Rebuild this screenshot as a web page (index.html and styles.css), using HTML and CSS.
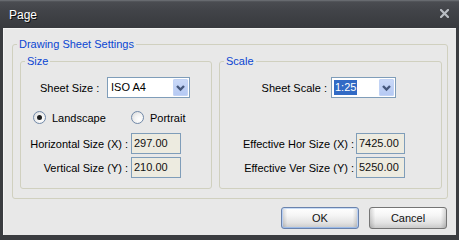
FILE: index.html
```html
<!DOCTYPE html>
<html>
<head>
<meta charset="utf-8">
<link rel="stylesheet" href="styles.css">
</head>
<body>
<div class="window">
  <div class="titlebar">
    <span class="title">Page</span>
    <svg class="close" width="9" height="9" viewBox="0 0 9 9"><path d="M1 1 L8 8 M8 1 L1 8" stroke="#b9bdc3" stroke-width="2.2" stroke-linecap="square"/></svg>
  </div>
  <div class="body">
    <fieldset class="group outer">
      <legend>Drawing Sheet Settings</legend>
      <div class="panels">
        <fieldset class="group size">
          <legend>Size</legend>
          <div class="sheet-row size-sheet">
            <span class="lbl">Sheet Size :</span>
            <div class="combo combo-size">
              <span class="combo-text">ISO A4</span>
              <span class="combo-btn"><svg width="15" height="17" viewBox="0 0 15 17"><path d="M4 7 L7.5 10.5 L11 7" fill="none" stroke="#45587c" stroke-width="2.4"/></svg></span>
            </div>
          </div>
          <div class="radios">
            <span class="radio"><span class="dot checked"></span>Landscape</span>
            <span class="radio"><span class="dot"></span>Portrait</span>
          </div>
          <div class="fields size-fields">
            <span class="flabel">Horizontal Size (X) :</span><span class="field">297.00</span>
            <span class="flabel">Vertical Size (Y) :</span><span class="field">210.00</span>
          </div>
        </fieldset>
        <fieldset class="group scale">
          <legend>Scale</legend>
          <div class="sheet-row scale-sheet">
            <span class="lbl">Sheet Scale :</span>
            <div class="combo combo-scale">
              <span class="combo-text"><span class="sel">1:25</span></span>
              <span class="combo-btn"><svg width="15" height="17" viewBox="0 0 15 17"><path d="M4 7 L7.5 10.5 L11 7" fill="none" stroke="#45587c" stroke-width="2.4"/></svg></span>
            </div>
          </div>
          <div class="fields scale-fields">
            <span class="flabel">Effective Hor Size (X) :</span><span class="field">7425.00</span>
            <span class="flabel">Effective Ver Size (Y) :</span><span class="field">5250.00</span>
          </div>
        </fieldset>
      </div>
    </fieldset>
    <div class="buttons">
      <button class="btn default">OK</button>
      <button class="btn">Cancel</button>
    </div>
  </div>
</div>
</body>
</html>
```
FILE: styles.css
```css
html, body {
  margin: 0;
  padding: 0;
}
body {
  font-family: "Liberation Sans", Arial, sans-serif;
  font-size: 11px;
  color: #000;
}
.window {
  width: 459px;
  height: 240px;
  background: #3a3c40;
  display: flex;
  flex-direction: column;
  box-sizing: border-box;
}
.titlebar {
  height: 28px;
  flex: none;
  display: flex;
  align-items: center;
  justify-content: space-between;
  padding: 0 10px 0 9px;
  background: linear-gradient(#74777c 0, #5a5d62 1px, #4a4c51 2px, #414348 40%, #383a3e 100%);
}
.title {
  color: #fff;
  font-size: 12px;
  text-shadow: 1px 1px 0 #0c0c0c;
  margin-top: 1px;
}
.close {
  display: block;
  margin-top: -1px;
}
.body {
  flex: 1;
  margin: 0 3px 5px 3px;
  background: #e8e8e8;
  border-top: 1px solid #f4f4f4;
  border-left: 1px solid #f4f4f4;
  display: flex;
  flex-direction: column;
}
.group {
  margin: 0;
  padding: 0;
  border: 1px solid #d0d0bf;
  border-radius: 3px;
  min-inline-size: 0;
}
.group > legend {
  padding: 0 2px;
  margin-left: 4px;
  line-height: 13px;
  color: #0a46d2;
}
.outer {
  margin: 9px 8px 0 8px;
}
.panels {
  display: flex;
  gap: 7px;
  padding: 4px 5px 9px 7px;
}
.size {
  width: 192px;
  box-sizing: border-box;
  padding-bottom: 10px;
}
.scale {
  flex: 1;
  padding-bottom: 10px;
}
.sheet-row {
  display: flex;
  align-items: center;
  margin-top: 9px;
  height: 21px;
}
.size-sheet {
  padding-left: 19px;
}
.size-sheet .lbl {
  width: 67px;
}
.scale-sheet .lbl {
  width: 107px;
  text-align: right;
  margin-right: 4px;
}
.combo {
  box-sizing: border-box;
  height: 21px;
  border: 1px solid #7f9db9;
  background: #fff;
  display: flex;
  align-items: center;
  justify-content: space-between;
  padding: 0 1px 0 3px;
}
.combo-size {
  width: 83px;
}
.combo-scale {
  width: 65px;
  padding-left: 2px;
}
.combo-text {
  line-height: 15px;
}
.sel {
  display: inline-block;
  background: #316ac5;
  color: #fff;
  padding: 0 1px;
  line-height: 15px;
}
.combo-btn {
  width: 15px;
  height: 17px;
  box-sizing: border-box;
  border-radius: 2px;
  background: linear-gradient(#cbdaf8, #b4c8f3);
  box-shadow: inset 0 0 0 1px #c2d3f5;
}
.combo-btn svg {
  display: block;
}
.radios {
  display: flex;
  align-items: center;
  margin-top: 13px;
  height: 13px;
  padding-left: 12px;
}
.radio {
  display: flex;
  align-items: center;
  gap: 6px;
}
.radio:first-child {
  width: 98px;
}
.dot {
  width: 13px;
  height: 13px;
  box-sizing: border-box;
  border-radius: 50%;
  border: 1px solid #7189a8;
  background: radial-gradient(circle at 65% 65%, #ffffff 0, #f2f2f2 45%, #d4d4d4 100%);
  position: relative;
}
.dot.checked::after {
  content: "";
  position: absolute;
  left: 3px;
  top: 3px;
  width: 5px;
  height: 5px;
  border-radius: 50%;
  background: #1e1e1e;
}
.fields {
  display: grid;
  grid-auto-rows: 21px;
  row-gap: 3px;
  margin-top: 9px;
  align-items: center;
}
.size-fields {
  grid-template-columns: 107px 50px;
  column-gap: 3px;
}
.scale-fields {
  grid-template-columns: 134px 49px;
  column-gap: 2px;
  margin-top: 35px;
}
.flabel {
  text-align: right;
  white-space: nowrap;
}
.field {
  box-sizing: border-box;
  height: 21px;
  line-height: 19px;
  border: 1px solid #7f9db9;
  background: #edebe0;
  padding-left: 2px;
  color: #111;
}
.buttons {
  display: flex;
  justify-content: flex-end;
  gap: 10px;
  margin: 8px 9px 0 0;
}
.btn {
  width: 78px;
  height: 22px;
  box-sizing: border-box;
  border: 1px solid #757575;
  border-radius: 3px;
  font-family: "Liberation Sans", Arial, sans-serif;
  font-size: 11px;
  color: #111;
  padding: 0;
  background:
    linear-gradient(to right, rgba(0,0,0,0.16), rgba(0,0,0,0) 7%, rgba(0,0,0,0) 93%, rgba(0,0,0,0.16)),
    linear-gradient(#ffffff, #f6f6f6 35%, #e2e2e2 75%, #c9c9c9);
}
.btn.default {
  border-color: #6a83ad;
  box-shadow: inset 0 1px 0 #c9dcf6, inset 0 -1px 0 #9cbbe8, inset 1px 0 0 #b7cef2, inset -1px 0 0 #b7cef2;
}
```
